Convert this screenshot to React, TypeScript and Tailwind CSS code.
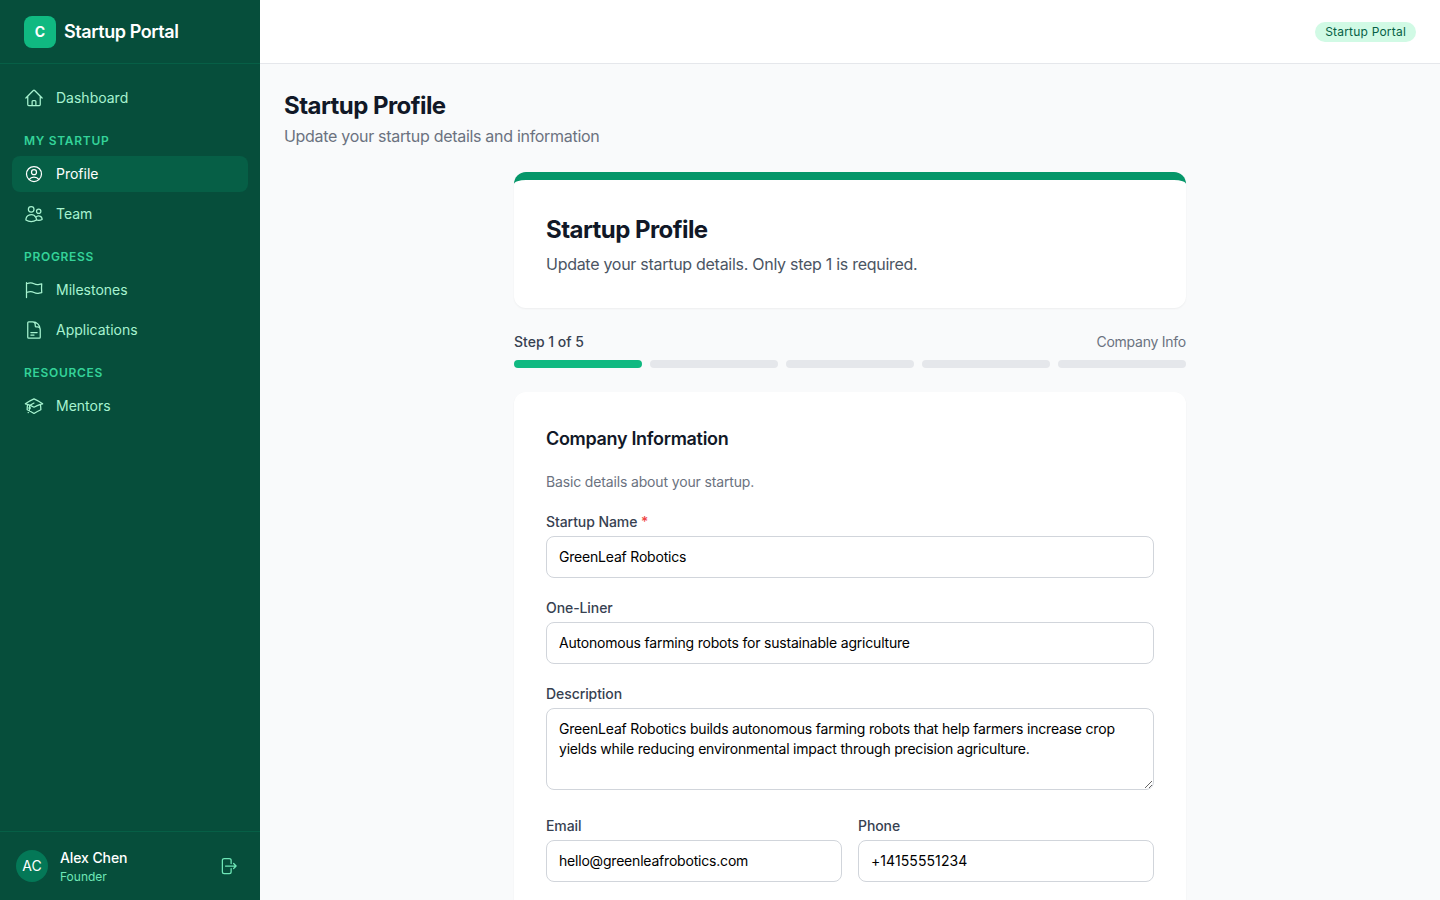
import { HiOutlineAcademicCap, HiOutlineArrowRightOnRectangle, HiOutlineDocumentText, HiOutlineFlag, HiOutlineHome, HiOutlineUserCircle, HiOutlineUsers } from "react-icons/hi2";
import type { IconType } from "react-icons";

type NavLinkProps = {
  icon: IconType;
  label: string;
  active?: boolean;
};

function NavLink({ icon: Icon, label, active }: NavLinkProps) {
  return (
    <a
      href="#"
      className={`flex h-9 items-center gap-3 rounded-lg px-3 text-sm ${active ? "bg-[#065f46] text-white" : "text-[#a7f3d0]"}`}
    >
      <Icon className="h-5 w-5 shrink-0" />
      {label}
    </a>
  );
}

function NavHeading({ label }: { label: string }) {
  return <div className="mb-[7px] px-3 pt-[17px] text-xs font-semibold uppercase tracking-[0.7px] text-[#34d399]">{label}</div>;
}

function Field({ label, required, children }: { label: string; required?: boolean; children: React.ReactNode }) {
  return (
    <div>
      <label className="mb-1 block text-sm font-medium tracking-[-0.08px] text-[#374151]">
        {label}
        {required && <span className="text-[#ef4444]"> *</span>}
      </label>
      {children}
    </div>
  );
}

const inputClass = "w-full rounded-lg border border-[#d1d5db] bg-white px-3 py-2.5 text-sm tracking-[-0.2px] text-black outline-none";

export default function App() {
  return (
    <div className="flex h-screen overflow-hidden bg-[#f9fafb] font-['Inter',sans-serif]">
      <aside className="flex w-[260px] shrink-0 flex-col bg-[#064e3b]">
        <div className="flex h-16 items-center gap-2 border-b border-[#065f46] px-6">
          <div className="flex h-8 w-8 items-center justify-center rounded-lg bg-[#10b981] text-sm font-bold text-white">C</div>
          <span className="text-lg font-semibold tracking-[-0.43px] text-white">Startup Portal</span>
        </div>
        <nav className="flex-1 px-3 py-4">
          <NavLink icon={HiOutlineHome} label="Dashboard" />
          <NavHeading label="My Startup" />
          <div className="space-y-1">
            <NavLink icon={HiOutlineUserCircle} label="Profile" active />
            <NavLink icon={HiOutlineUsers} label="Team" />
          </div>
          <NavHeading label="Progress" />
          <div className="space-y-1">
            <NavLink icon={HiOutlineFlag} label="Milestones" />
            <NavLink icon={HiOutlineDocumentText} label="Applications" />
          </div>
          <NavHeading label="Resources" />
          <NavLink icon={HiOutlineAcademicCap} label="Mentors" />
        </nav>
        <div className="flex items-center gap-3 border-t border-[#065f46] p-4">
          <div className="flex h-8 w-8 items-center justify-center rounded-full bg-[#047857] text-sm text-white">AC</div>
          <div className="min-w-0 flex-1">
            <div className="text-sm font-medium tracking-[-0.1px] text-white">Alex Chen</div>
            <div className="-mb-0.5 text-xs leading-[18px] text-[#6ee7b7]">Founder</div>
          </div>
          <button className="p-1.5 text-[#6ee7b7]">
            <HiOutlineArrowRightOnRectangle className="h-5 w-5" />
          </button>
        </div>
      </aside>

      <div className="flex min-w-0 flex-1 flex-col">
        <header className="flex h-16 shrink-0 items-center justify-end border-b border-[#e5e7eb] bg-white px-6">
          <span className="rounded-full bg-[#d1fae5] px-2.5 py-0.5 text-xs tracking-[0.2px] text-[#065f46]">Startup Portal</span>
        </header>
        <main className="flex-1 overflow-hidden p-6">
          <h1 className="-mb-1 text-2xl leading-[36px] font-bold tracking-[-0.55px] text-[#111827]">Startup Profile</h1>
          <p className="mt-1 text-base tracking-[-0.3px] text-[#6b7280]">Update your startup details and information</p>

          <div className="mx-auto mt-6 max-w-2xl">
            <div className="rounded-xl border-t-8 border-[#059669] bg-white p-8 shadow-[0_1px_2px_rgba(0,0,0,0.05)]">
              <h2 className="-mb-1 text-2xl leading-[36px] font-bold tracking-[-0.55px] text-[#111827]">Startup Profile</h2>
              <p className="mt-2 text-base tracking-[-0.28px] text-[#4b5563]">Update your startup details. Only step 1 is required.</p>
            </div>

            <div className="mt-6 mb-6">
              <div className="mb-2 flex justify-between text-sm">
                <span className="font-medium text-[#374151]">Step 1 of 5</span>
                <span className="tracking-[-0.25px] text-[#6b7280]">Company Info</span>
              </div>
              <div className="flex gap-2">
                <div className="h-2 flex-1 rounded-full bg-[#10b981]" />
                <div className="h-2 flex-1 rounded-full bg-[#e5e7eb]" />
                <div className="h-2 flex-1 rounded-full bg-[#e5e7eb]" />
                <div className="h-2 flex-1 rounded-full bg-[#e5e7eb]" />
                <div className="h-2 flex-1 rounded-full bg-[#e5e7eb]" />
              </div>
            </div>

            <div className="rounded-xl bg-white p-8 shadow-[0_1px_2px_rgba(0,0,0,0.05)]">
              <h3 className="mb-[18px] text-lg leading-[30px] font-semibold tracking-[-0.32px] text-[#111827]">Company Information</h3>
              <p className="mb-5 text-sm tracking-[-0.15px] text-[#6b7280]">Basic details about your startup.</p>
              <div className="space-y-5">
                <Field label="Startup Name" required>
                  <input className={inputClass} defaultValue="GreenLeaf Robotics" />
                </Field>
                <Field label="One-Liner">
                  <input className={inputClass} defaultValue="Autonomous farming robots for sustainable agriculture" />
                </Field>
                <Field label="Description">
                  <textarea
                    className={inputClass}
                    rows={3}
                    defaultValue="GreenLeaf Robotics builds autonomous farming robots that help farmers increase crop yields while reducing environmental impact through precision agriculture."
                  />
                </Field>
                <div className="grid grid-cols-2 gap-4">
                  <Field label="Email">
                    <input className={inputClass} defaultValue="hello@greenleafrobotics.com" />
                  </Field>
                  <Field label="Phone">
                    <input
                      className="w-full rounded-lg border border-[#d1d5db] bg-white px-3 py-2.5 text-sm tracking-[0.08px] text-black outline-none"
                      defaultValue="+14155551234"
                    />
                  </Field>
                </div>
              </div>
            </div>
          </div>
        </main>
      </div>
    </div>
  );
}
